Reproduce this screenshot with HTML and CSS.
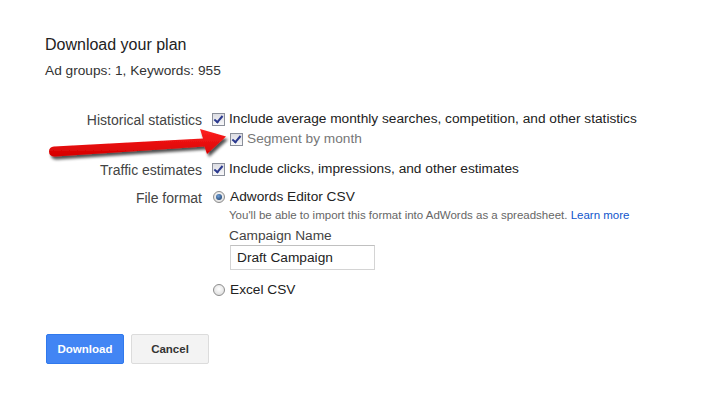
FILE: index.html
```html
<!DOCTYPE html>
<html lang="en">

<head>
    <meta charset="UTF-8">
    <meta name="viewport" content="width=device-width, initial-scale=1.0">
    <title>Download your plan</title>
    <link rel="stylesheet" href="styles.css">
</head>

<body>
    <div class="dialog">
        <h1 class="title">Download your plan</h1>
        <p class="summary">Ad groups: 1, Keywords: 955</p>

        <div class="options">
            <div class="label">Historical statistics</div>
            <div class="field first">
                <label class="check"><span class="box"></span>Include average monthly searches, competition, and other statistics</label>
                <label class="check sub"><span class="box"></span>Segment by month</label>
            </div>

            <div class="label">Traffic estimates</div>
            <div class="field">
                <label class="check"><span class="box"></span>Include clicks, impressions, and other estimates</label>
            </div>

            <div class="label">File format</div>
            <div class="field">
                <label class="radio"><span class="dot on"></span>Adwords Editor CSV</label>
                <div class="nested">
                    <div class="hint">You'll be able to import this format into AdWords as a spreadsheet. <a href="#">Learn more</a></div>
                    <div class="campaign">Campaign Name</div>
                    <div class="input">Draft Campaign</div>
                </div>
                <label class="radio last"><span class="dot"></span>Excel CSV</label>
            </div>
        </div>

        <div class="buttons">
            <button class="btn primary">Download</button>
            <button class="btn">Cancel</button>
        </div>

        <!-- red annotation arrow -->
        <svg class="arrow" width="200" height="40" viewBox="45 120 200 40">
            <defs>
                <filter id="shade" x="-10%" y="-30%" width="120%" height="160%">
                    <feGaussianBlur in="SourceAlpha" stdDeviation="1.5"/>
                    <feOffset dx="1.5" dy="2.5" result="b"/>
                    <feComponentTransfer><feFuncA type="linear" slope="0.7"/></feComponentTransfer>
                    <feMerge><feMergeNode/><feMergeNode in="SourceGraphic"/></feMerge>
                </filter>
                <linearGradient id="red" x1="0" y1="0" x2="0" y2="1">
                    <stop offset="0" stop-color="#ff2020"/>
                    <stop offset="1" stop-color="#d40000"/>
                </linearGradient>
            </defs>
            <path filter="url(#shade)" fill="url(#red)"
                d="M54 146.5 L203 138.5 L200 129 L226 136.5 L207 154 L204.5 146.5 L55 156.5 Q49 156.5 49 151.5 Q49 146.8 54 146.5 Z"/>
        </svg>
    </div>
</body>

</html>
```

FILE: styles.css
```css
* {
    margin: 0;
    padding: 0;
    box-sizing: border-box;
}

body {
    background: #fff;
    font-family: Arial, "Liberation Sans", sans-serif;
    color: #222;
}

.dialog {
    position: relative;
    width: 708px;
    height: 397px;
    padding: 35px 0 0 45px;
}

.title {
    font-size: 16px;
    font-weight: normal;
    line-height: 20px;
    color: #222;
}

.summary {
    font-size: 13.7px;
    line-height: 16px;
    margin-top: 8px;
    color: #333;
}

.options {
    display: grid;
    grid-template-columns: 157px 1fr;
    column-gap: 10px;
    row-gap: 10px;
    margin-top: 31px;
    font-size: 13.7px;
}

.label {
    text-align: right;
    color: #444;
    line-height: 16px;
    padding-top: 2px;
    font-size: 14px;
}

.field {
    display: flex;
    flex-direction: column;
    align-items: flex-start;
}

.field.first {
    margin-bottom: 2px;
}

.check,
.radio {
    display: flex;
    align-items: center;
    line-height: 18px;
    color: #222;
}

.check.sub {
    margin-left: 18px;
    color: #777;
    margin-top: 2px;
}

.box {
    width: 13px;
    height: 13px;
    margin-right: 4px;
    border: 1px solid #8a8f9a;
    background: linear-gradient(#dcdde3, #f7f7f9);
    position: relative;
}

.box::after {
    content: "";
    position: absolute;
    left: 3px;
    top: 0px;
    width: 3px;
    height: 7px;
    border: solid #2b3a8f;
    border-width: 0 2px 2px 0;
    transform: rotate(40deg);
}

.dot {
    width: 12px;
    height: 12px;
    margin: 0 5px 0 1px;
    border-radius: 50%;
    border: 1px solid #8d8d8d;
    background: radial-gradient(circle at 50% 40%, #fff, #d6d6d6);
    position: relative;
}

.dot.on::after {
    content: "";
    position: absolute;
    left: 2px;
    top: 2px;
    width: 6px;
    height: 6px;
    border-radius: 50%;
    background: radial-gradient(circle at 40% 35%, #6fa0d8, #12325e);
}

.nested {
    padding-left: 17px;
}

.hint {
    font-size: 11.5px;
    color: #666;
    line-height: 14px;
    margin-top: 2px;
}

.hint a {
    color: #15c;
    text-decoration: none;
}

.campaign {
    color: #444;
    line-height: 16px;
    margin-top: 6px;
}

.input {
    width: 145px;
    height: 25px;
    margin: 1px 0 0 1px;
    padding: 0 6px;
    border: 1px solid #d4d4d4;
    border-top-color: #c0c0c0;
    line-height: 23px;
    color: #222;
}

.radio.last {
    margin-top: 11px;
}

.buttons {
    display: flex;
    gap: 7px;
    margin-top: 35px;
    margin-left: 1px;
}

.btn {
    height: 30px;
    width: 78px;
    border-radius: 2px;
    border: 1px solid #dcdcdc;
    background: #f3f3f3;
    color: #333;
    font-family: Arial, "Liberation Sans", sans-serif;
    font-size: 11.5px;
    font-weight: bold;
}

.btn.primary {
    background: #4285f4;
    border-color: #3079ed;
    color: #fff;
}

.arrow {
    position: absolute;
    left: 45px;
    top: 120px;
    overflow: visible;
}
```
